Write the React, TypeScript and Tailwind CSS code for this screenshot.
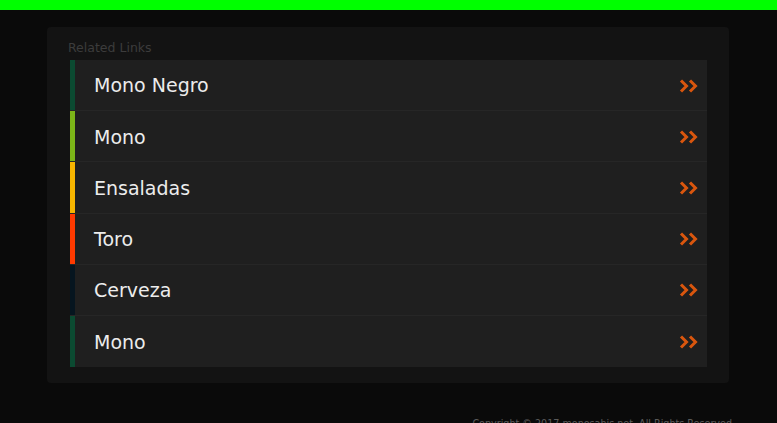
import React from 'react';

type LinkItem = {
  label: string;
  color: string;
};

const links: LinkItem[] = [
  { label: 'Mono Negro', color: 'bg-[#0b4a31]' },
  { label: 'Mono', color: 'bg-[#7cb518]' },
  { label: 'Ensaladas', color: 'bg-[#f7b500]' },
  { label: 'Toro', color: 'bg-[#ff3a00]' },
  { label: 'Cerveza', color: 'bg-[#06151f]' },
  { label: 'Mono', color: 'bg-[#0b4a31]' },
];

function Chevrons() {
  return (
    <svg width="19" height="14" viewBox="0 0 19 14" fill="none">
      <path d="M2 1.5 L7.5 7 L2 12.5" stroke="#d9560e" strokeWidth="3" />
      <path d="M11 1.5 L16.5 7 L11 12.5" stroke="#d9560e" strokeWidth="3" />
    </svg>
  );
}

export default function App() {
  return (
    <div
      className="min-h-[423px] w-full overflow-hidden bg-[#0a0a0a]"
      style={{ fontFamily: '"DejaVu Sans", "Noto Sans", sans-serif' }}
    >
      <div className="h-[10px] bg-[#00ff00]" />

      <div className="pt-[17px] pl-[47px]">
        <section className="w-[682px] rounded-[4px] bg-[#131313] pl-[23px] pr-[22px] pt-[13px] pb-[16px]">
          <h2 className="mb-[5px] -ml-[2px] text-[12.5px] leading-[15px] text-[#3c3c3c]">Related Links</h2>
          <ul>
            {links.map((link, i) => (
              <li
                key={i}
                className={`flex h-[51.2px] items-stretch bg-[#1f1f1f] ${
                  i < links.length - 1 ? 'border-b border-[#262626]' : ''
                }`}
              >
                <span className={`w-[5px] ${link.color}`} />
                <a
                  href="#"
                  className="flex flex-1 items-center justify-between pl-[19px] pr-[9px] pt-[1px] text-[19px] text-[#ececec]"
                >
                  <span>{link.label}</span>
                  <Chevrons />
                </a>
              </li>
            ))}
          </ul>
        </section>
      </div>

      <footer className="mt-[35px] pr-[45px] text-right text-[9.6px] leading-[12px] text-[#5a5a5a]">
        Copyright © 2017 monosahis.net. All Rights Reserved
      </footer>
    </div>
  );
}
